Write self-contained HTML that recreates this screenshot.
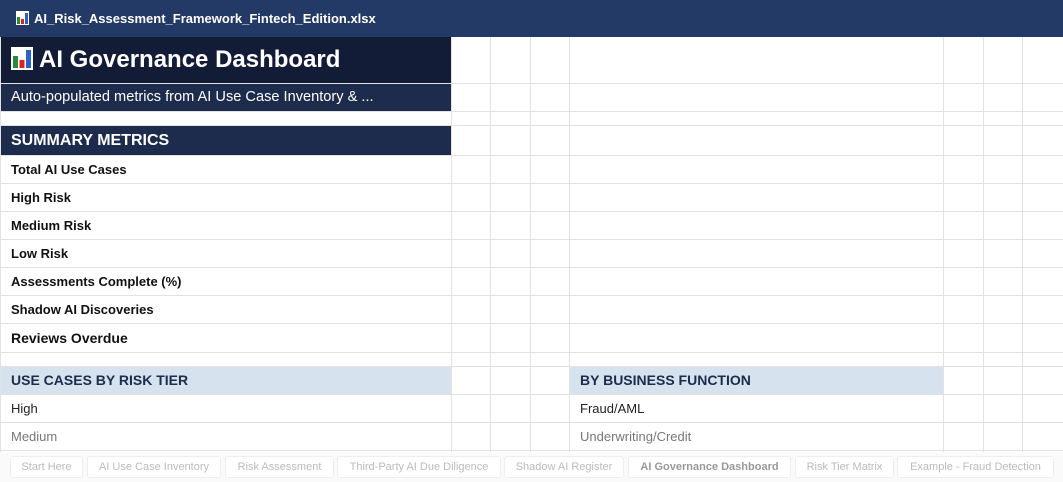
<!DOCTYPE html>
<html><head><style>
*{margin:0;padding:0;box-sizing:border-box}
body{width:1063px;height:482px;overflow:hidden;background:#fff;font-family:"Liberation Sans",Arial,sans-serif;position:relative}
.top{position:absolute;left:0;top:0;width:1063px;height:37px;background:#233a66;color:#fff;font-weight:bold;font-size:13px;line-height:37px;padding-left:16px}
.grid{position:absolute;left:0;top:37px;width:1063px;height:415px}
.v{position:absolute;top:0;height:415px;width:1px;background:#e2e2e2}
.h{position:absolute;left:0;width:1063px;height:1px;background:#e2e2e2}
.c{position:absolute;left:1px;font-size:13px;padding-left:10px}
.b{font-weight:bold;color:#111}
.tabs{position:absolute;top:452px;left:0;width:1063px;height:30px;background:#fafafa}
.tab{position:absolute;top:4px;height:22px;border:1px solid #eee;border-radius:3px;background:#fff;color:#bbb;font-size:11px;line-height:20px;text-align:center}
svg{vertical-align:-2px;margin-right:5px}
</style></head><body>
<div class="top"><svg width="13" height="14" viewBox="0 0 13 14"><rect width="13" height="14" fill="#fff"/><rect x="1" y="6" width="3" height="7" fill="#2a8a3a"/><rect x="5" y="8" width="3" height="5" fill="#d22"/><rect x="9" y="2" width="3" height="11" fill="#2a63c8"/></svg>AI_Risk_Assessment_Framework_Fintech_Edition.xlsx</div>
<div class="grid">
<div class="v" style="left:451px"></div><div class="v" style="left:490px"></div><div class="v" style="left:530px"></div><div class="v" style="left:569px"></div><div class="v" style="left:943px"></div><div class="v" style="left:983px"></div><div class="v" style="left:1022px"></div><div class="v" style="left:0"></div>
<div class="h" style="top:46px"></div><div class="h" style="top:74px"></div><div class="h" style="top:88px"></div><div class="h" style="top:118px"></div>
<div class="h" style="top:146px"></div><div class="h" style="top:174px"></div><div class="h" style="top:202px"></div><div class="h" style="top:230px"></div><div class="h" style="top:258px"></div><div class="h" style="top:286px"></div><div class="h" style="top:315px"></div><div class="h" style="top:329px"></div><div class="h" style="top:357px"></div><div class="h" style="top:385px"></div><div class="h" style="top:413px"></div>
<div class="c" style="top:0;height:46px;width:450px;background:#121c36;color:#fff;font-weight:bold;font-size:24px;line-height:46px"><svg width="22" height="23" viewBox="0 0 22 23" style="vertical-align:-3px;margin-right:6px"><rect width="22" height="23" fill="#fff"/><rect x="2" y="9" width="5" height="12" fill="#2a8a3a"/><rect x="8.5" y="13" width="5" height="8" fill="#d22"/><rect x="15" y="3" width="5" height="18" fill="#2a63c8"/></svg>AI Governance Dashboard</div>
<div class="c" style="top:47px;height:27px;width:450px;background:#1d2b4c;color:#fff;line-height:27px;font-size:14.6px">Auto-populated metrics from AI Use Case Inventory &amp; ...</div>
<div class="c" style="top:89px;height:29px;width:450px;background:#1d2b4c;color:#fff;font-weight:bold;font-size:16px;line-height:29px">SUMMARY METRICS</div>
<div class="c b" style="top:119px;line-height:27px">Total AI Use Cases</div>
<div class="c b" style="top:147px;line-height:27px">High Risk</div>
<div class="c b" style="top:175px;line-height:27px">Medium Risk</div>
<div class="c b" style="top:203px;line-height:27px">Low Risk</div>
<div class="c b" style="top:231px;line-height:27px">Assessments Complete (%)</div>
<div class="c b" style="top:259px;line-height:27px">Shadow AI Discoveries</div>
<div class="c b" style="top:287px;line-height:28px;font-size:14px">Reviews Overdue</div>
<div class="c" style="top:330px;height:27px;width:450px;background:#d6e3ee;color:#1d2b4c;font-weight:bold;font-size:14px;line-height:27px">USE CASES BY RISK TIER</div>
<div class="c" style="left:570px;top:330px;height:27px;width:373px;background:#d6e3ee;color:#1d2b4c;font-weight:bold;font-size:14px;line-height:27px">BY BUSINESS FUNCTION</div>
<div class="c" style="top:358px;line-height:27px;color:#222">High</div>
<div class="c" style="left:570px;top:358px;line-height:27px;color:#222">Fraud/AML</div>
<div class="c" style="top:386px;line-height:27px;color:#777">Medium</div>
<div class="c" style="left:570px;top:386px;line-height:27px;color:#777">Underwriting/Credit</div>
</div>
<div class="tabs">
<div class="tab" style="left:10px;width:73px">Start Here</div>
<div class="tab" style="left:87px;width:134px">AI Use Case Inventory</div>
<div class="tab" style="left:225px;width:109px">Risk Assessment</div>
<div class="tab" style="left:337px;width:164px">Third-Party AI Due Diligence</div>
<div class="tab" style="left:504px;width:120px">Shadow AI Register</div>
<div class="tab" style="left:628px;width:163px;color:#999;font-weight:bold">AI Governance Dashboard</div>
<div class="tab" style="left:795px;width:99px">Risk Tier Matrix</div>
<div class="tab" style="left:897px;width:157px">Example - Fraud Detection</div>
</div>
</body></html>
